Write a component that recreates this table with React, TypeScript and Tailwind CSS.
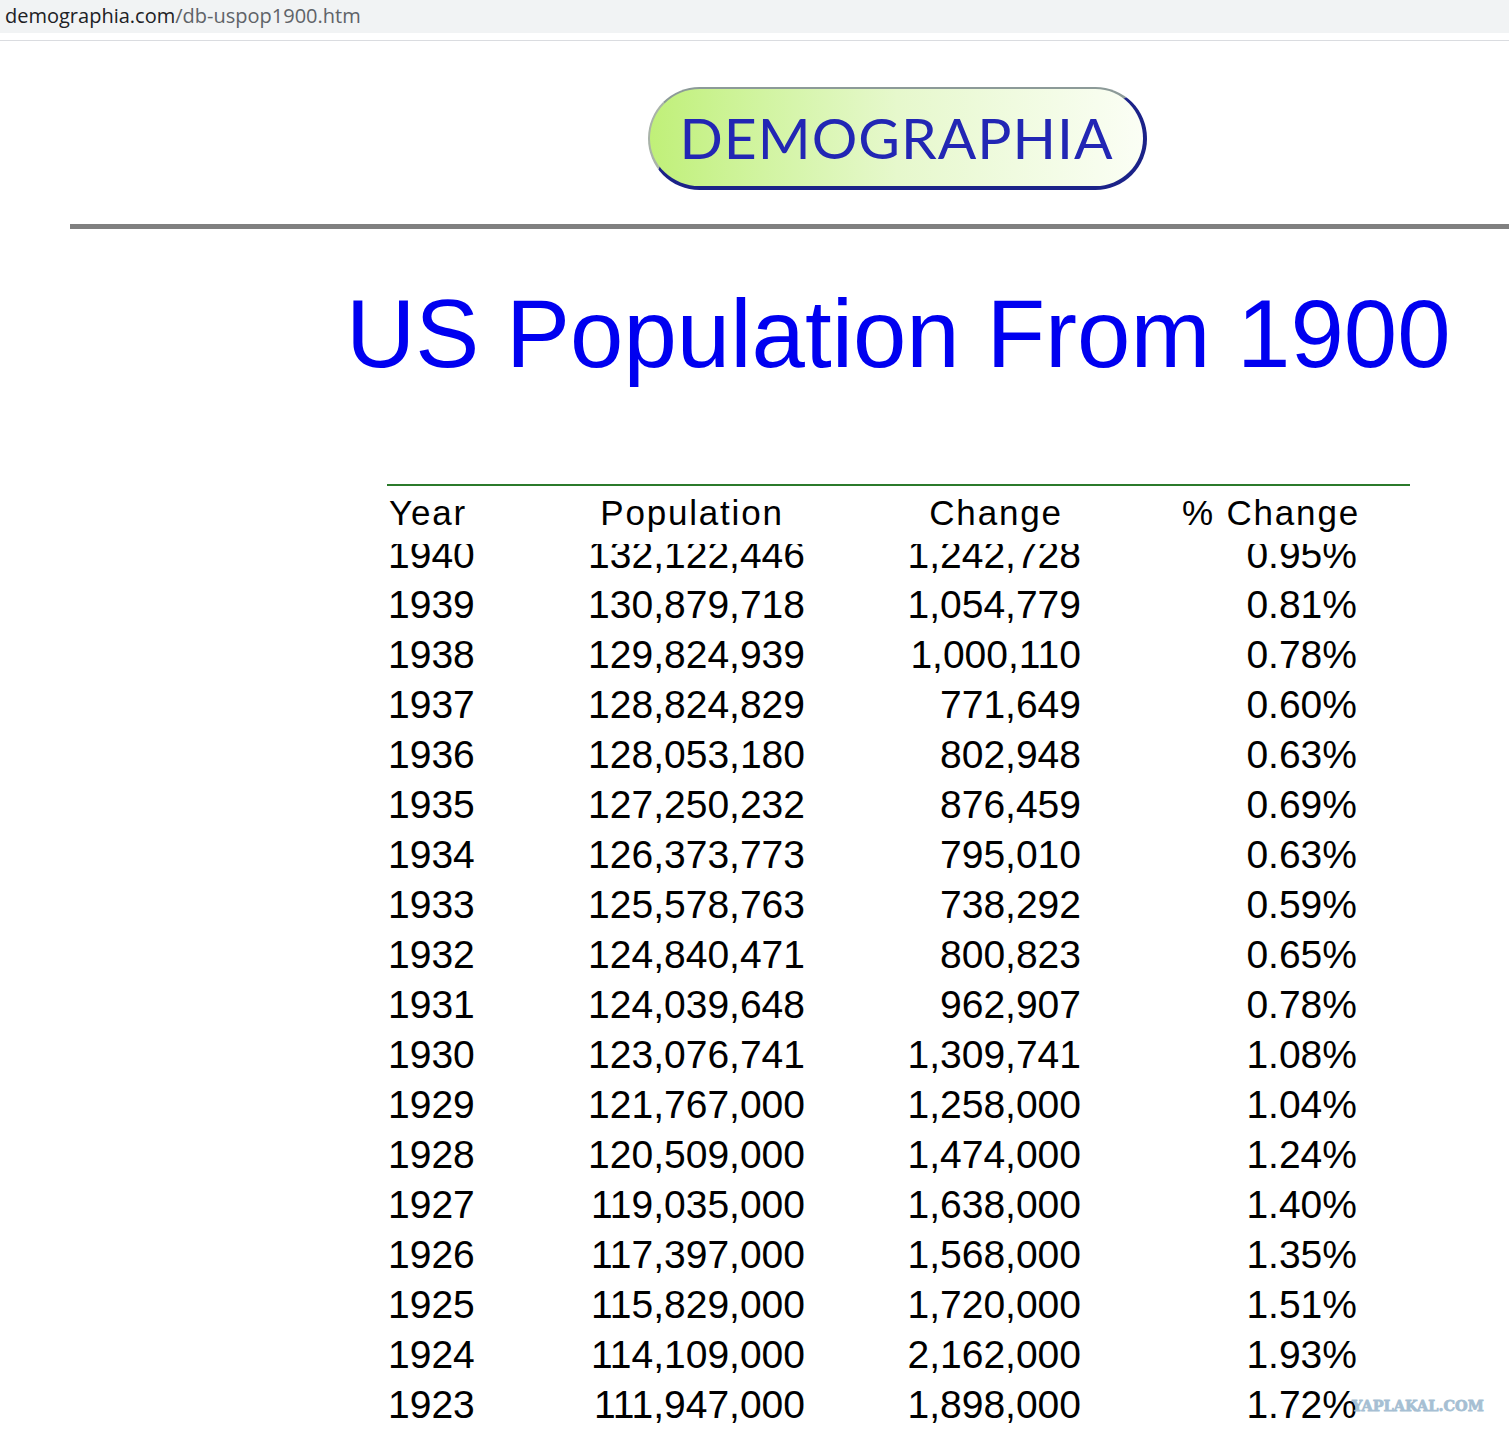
const rows: [string, string, string, string][] = [
  ['1939', '130,879,718', '1,054,779', '0.81%'],
  ['1938', '129,824,939', '1,000,110', '0.78%'],
  ['1937', '128,824,829', '771,649', '0.60%'],
  ['1936', '128,053,180', '802,948', '0.63%'],
  ['1935', '127,250,232', '876,459', '0.69%'],
  ['1934', '126,373,773', '795,010', '0.63%'],
  ['1933', '125,578,763', '738,292', '0.59%'],
  ['1932', '124,840,471', '800,823', '0.65%'],
  ['1931', '124,039,648', '962,907', '0.78%'],
  ['1930', '123,076,741', '1,309,741', '1.08%'],
  ['1929', '121,767,000', '1,258,000', '1.04%'],
  ['1928', '120,509,000', '1,474,000', '1.24%'],
  ['1927', '119,035,000', '1,638,000', '1.40%'],
  ['1926', '117,397,000', '1,568,000', '1.35%'],
  ['1925', '115,829,000', '1,720,000', '1.51%'],
  ['1924', '114,109,000', '2,162,000', '1.93%'],
  ['1923', '111,947,000', '1,898,000', '1.72%'],
]

function DataRow({ row }: { row: [string, string, string, string] }) {
  const [year, pop, change, pct] = row
  return (
    <div className="flex h-[50px] shrink-0 text-[39px] leading-[50px]">
      <div className="w-[130px] pl-px">{year}</div>
      <div className="w-[288px] text-right">{pop}</div>
      <div className="w-[276px] text-right">{change}</div>
      <div className="w-[276px] text-right">{pct}</div>
    </div>
  )
}

export default function App() {
  return (
    <div className="relative min-h-[1435px] overflow-hidden bg-white font-['Liberation_Sans',Arial,sans-serif] text-black">
      {/* address bar */}
      <div className="flex h-[33px] items-center bg-[#f1f3f4] pb-px pl-[5px] font-['Open_Sans',sans-serif] text-[20px] leading-none">
        <span className="text-[#202124]">demographia.com</span>
        <span className="text-[#5f6368]">/db-uspop1900.htm</span>
      </div>
      <div className="mt-[7px] h-px bg-[#dadce0]" />

      {/* logo */}
      <div className="ml-[648px] mt-[46px] flex h-[103px] w-[499px] items-center justify-center rounded-full border-l-2 border-r-[4px] border-t-2 border-b-[4px] border-l-[#a9b3a9] border-t-[#8c9a98] border-r-[#1b2288] border-b-[#1b2288] bg-gradient-to-r from-[#c0f078] via-[#e6f8cc] to-[#fbfef5]">
        <span className="font-['Lato',sans-serif] text-[57px] font-normal leading-none tracking-[1px] text-[#2226b4]">
          DEMOGRAPHIA
        </span>
      </div>

      <div className="ml-[70px] mt-[34px] h-[5px] bg-[#808080]" />

      <h1 className="mt-[50px] pl-[346px] text-[96px] font-normal leading-[110px] text-[#0000f0]">
        US Population From 1900
      </h1>

      {/* table */}
      <div className="ml-[387px] mt-[95px] w-[1023px]">
        <div className="h-[2px] bg-[#2b7a2b]" />
        <div className="flex h-[58px] text-[35px] leading-[53px] tracking-[1.8px]">
          <div className="w-[205px] pl-[2px]">Year</div>
          <div className="w-[200px] text-center">Population</div>
          <div className="w-[104px]" />
          <div className="w-[200px] text-center">Change</div>
          <div className="w-[75px]" />
          <div className="w-[200px] text-center">% Change</div>
        </div>
        <div className="flex h-[36px] flex-col justify-end overflow-hidden">
          <DataRow row={['1940', '132,122,446', '1,242,728', '0.95%']} />
        </div>
        {rows.map((r) => (
          <DataRow key={r[0]} row={r} />
        ))}
      </div>

      <div className="absolute left-[1352px] top-[1399px] font-['DejaVu_Serif',serif] text-[14.5px] font-bold leading-none text-[#a6bfd3] [-webkit-text-stroke:0.8px_#a6bfd3]">
        YAPLAKAL.COM
      </div>
    </div>
  )
}
